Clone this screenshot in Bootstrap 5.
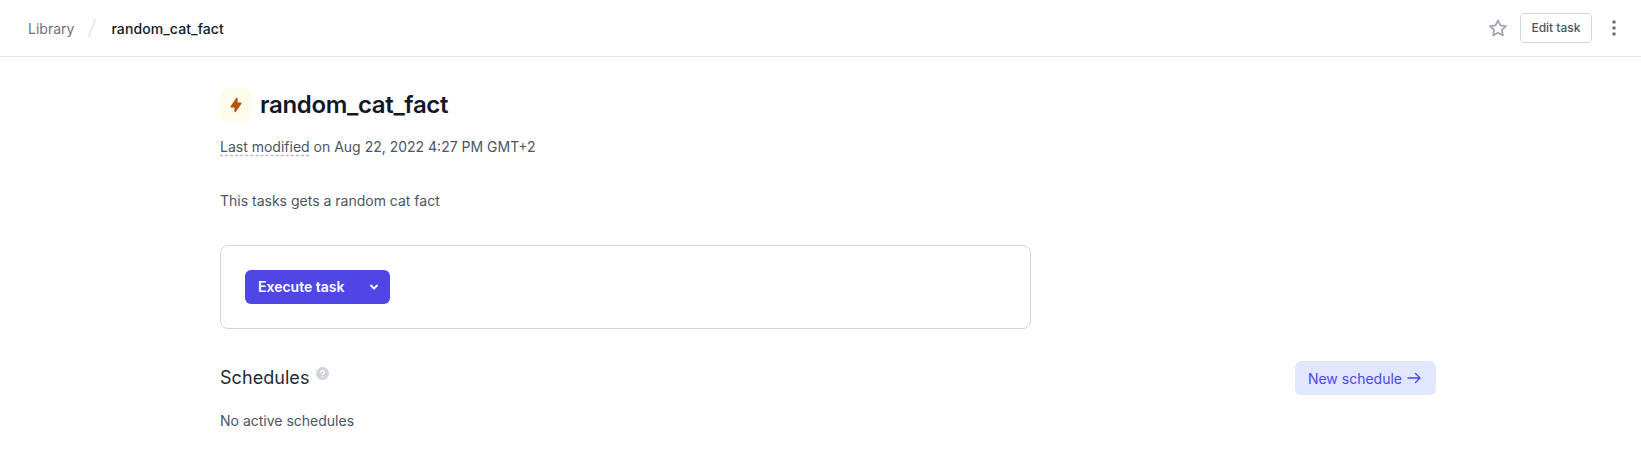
<!DOCTYPE html>
<html lang="en">
<head>
    <meta charset="UTF-8">
    <meta name="viewport" content="width=device-width, initial-scale=1.0">
    <title>random_cat_fact</title>
    <link href="https://cdn.jsdelivr.net/npm/bootstrap@5.3.0/dist/css/bootstrap.min.css" rel="stylesheet">
    <style>
        body { font-family: Inter, "Liberation Sans", sans-serif; color: #4b5563; font-size: 14px; background: #fff; }
        .top-bar { height: 57px; border-bottom: 1px solid #e5e7eb; padding: 0 24px 0 28px; }
        .crumb-link { color: #6b7280; text-decoration: none; font-size: 14px; }
        .crumb-sep { margin: 0 15px 0 14px; }
        .crumb-current { color: #111827; font-weight: 500; font-size: 14px; letter-spacing: .1px; }
        .edit-btn { font-size: 12px; font-weight: 500; color: #4b5563; border: 1px solid #d1d5db; border-radius: 4px; background: #fff; height: 30px; padding: 0 10.500px; margin: 0 19px 0 12px; }
        .page-body { width: 1216px; margin-left: 220px; padding-top: 32px; }
        .task-icon { width: 32px; height: 32px; background: #fffbeb; border-radius: 6px; }
        .task-title { font-size: 24px; font-weight: 600; color: #111827; line-height: 32px; margin: 0 0 0 8px; letter-spacing: -.33px; }
        .modified-line { margin-top: 16px; line-height: 20px; color: #4b5563; }
        .dash-under { text-decoration: underline dashed #b6bbc4; text-underline-offset: 3px; }
        .task-desc { margin-top: 34px; margin-bottom: 0; line-height: 20px; }
        .run-box { width: 811px; height: 84px; margin-top: 34px; border: 1px solid #d1d5db; border-radius: 8px; padding: 24px; }
        .run-group { background: #4f46e5; border-radius: 6px; height: 34px; color: #fff; font-weight: 600; }
        .run-main { padding: 0 13px; line-height: 34px; color: #fff; background: none; border: 0; font-weight: 600; font-size: 14px; }
        .run-caret { width: 33px; height: 34px; background: none; border: 0; border-left: 1px solid #4c43df; padding: 0 1px 0 0; }
        .sched-row { margin-top: 32px; height: 34px; }
        .sched-title { font-size: 18px; font-weight: 400; color: #1f2937; line-height: 34px; margin: 0; letter-spacing: .05px; }
        .help-dot { margin: 0 0 10px 7px; }
        .new-sched { background: #e0e7ff; color: #4f46e5; border: 0; border-radius: 6px; height: 34px; padding: 0 14px 0 13px; font-size: 14px; font-weight: 400; }
        .no-sched { margin-top: 16px; margin-bottom: 0; line-height: 20px; }
    </style>
</head>
<body>
    <!-- Top bar -->
    <div class="top-bar d-flex align-items-center justify-content-between">
        <div class="d-flex align-items-center">
            <a class="crumb-link" href="#">Library</a>
            <svg class="crumb-sep" width="8" height="20" viewBox="0 0 8 20"><path d="M7.500 1 0.500 19" stroke="#d1d5db" fill="none"/></svg>
            <span class="crumb-current">random_cat_fact</span>
        </div>
        <div class="d-flex align-items-center">
            <svg width="20" height="20" viewBox="0 0 24 24" fill="none" stroke="#9ca3af" stroke-width="2" stroke-linejoin="round"><path d="M12 2.800l2.900 6 6.600.9-4.800 4.600 1.200 6.600L12 17.700l-5.900 3.200 1.200-6.600-4.800-4.600 6.600-.9z"/></svg>
            <button class="edit-btn">Edit task</button>
            <svg width="6" height="18" viewBox="0 0 6 18" fill="#6b7280"><circle cx="3" cy="3" r="1.800"/><circle cx="3" cy="9" r="1.800"/><circle cx="3" cy="15" r="1.800"/></svg>
        </div>
    </div>

    <div class="page-body">
        <!-- Task title -->
        <div class="d-flex align-items-center">
            <div class="task-icon d-flex align-items-center justify-content-center">
                <svg width="16" height="16" viewBox="0 0 20 20" fill="#b45309"><path d="M11.300 1.050a1 1 0 0 1 .7.95v5h4a1 1 0 0 1 .82 1.570l-7 10A1 1 0 0 1 8 18v-5H4a1 1 0 0 1-.82-1.570l7-10a1 1 0 0 1 1.120-.38z"/></svg>
            </div>
            <h1 class="task-title">random_cat_fact</h1>
        </div>
        <div class="modified-line"><span class="dash-under">Last modified</span> on Aug 22, 2022 4:27 PM GMT+2</div>
        <p class="task-desc">This tasks gets a random cat fact</p>

        <!-- Execute -->
        <div class="run-box">
            <div class="run-group d-inline-flex">
                <button class="run-main">Execute task</button>
                <button class="run-caret d-flex align-items-center justify-content-center">
                    <svg width="12" height="12" viewBox="0 0 12 12" fill="none" stroke="#fff" stroke-width="1.800" stroke-linecap="round" stroke-linejoin="round"><path d="M3 4.500 6 7.500 9 4.500"/></svg>
                </button>
            </div>
        </div>

        <!-- Schedules -->
        <div class="sched-row d-flex align-items-center justify-content-between">
            <div class="d-flex align-items-center">
                <h2 class="sched-title">Schedules</h2>
                <svg class="help-dot" width="13" height="13" viewBox="0 0 13 13"><circle cx="6.500" cy="6.500" r="6.500" fill="#d1d5db"/><path d="M4.800 5.200c0-2.100 3.500-2.100 3.500 0 0 1.300-1.700 1.200-1.700 2.400" stroke="#fff" stroke-width="1.300" fill="none" stroke-linecap="round"/><circle cx="6.600" cy="9.700" r=".8" fill="#fff"/></svg>
            </div>
            <button class="new-sched d-flex align-items-center gap-1">New schedule
                <svg width="16" height="16" viewBox="0 0 16 16" fill="none" stroke="#4f46e5" stroke-width="1.400" stroke-linecap="round" stroke-linejoin="round"><path d="M2 8h12M9.500 3.500 14 8l-4.500 4.500"/></svg>
            </button>
        </div>
        <p class="no-sched">No active schedules</p>
    </div>
    <script src="https://cdn.jsdelivr.net/npm/bootstrap@5.3.0/dist/js/bootstrap.bundle.min.js"></script>
</body>
</html>
